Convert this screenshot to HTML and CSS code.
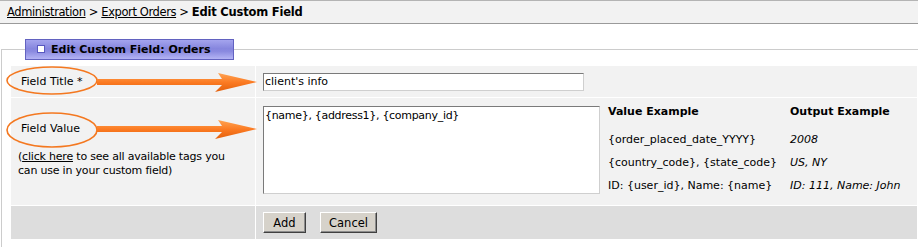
FILE: index.html
```html
<!DOCTYPE html>
<html>
<head>
    <link rel="stylesheet" href="styles.css">
</head>
<body>
    <div class="crumbs">
        <a href="#">Administration</a> &gt; <a href="#">Export Orders</a> &gt; <b>Edit Custom Field</b>
    </div>
    <fieldset class="panel">
        <legend><span class="box"></span>Edit Custom Field: Orders</legend>
        <table class="form">
            <tr class="first">
                <td class="label"><span class="name">Field Title *</span></td>
                <td class="value"><input type="text" value="client's info"></td>
            </tr>
            <tr class="second">
                <td class="label top">
                    <div class="name">Field Value</div>
                    <div class="note">(<a href="#">click here</a> to see all available tags you can use in your custom field)</div>
                </td>
                <td class="value">
                    <div class="pair">
                        <textarea spellcheck="false">{name}, {address1}, {company_id}</textarea>
                        <table class="examples">
                            <tr><th class="col">Value Example</th><th>Output Example</th></tr>
                            <tr><td>{order_placed_date_YYYY}</td><td class="out">2008</td></tr>
                            <tr><td>{country_code}, {state_code}</td><td class="out">US, NY</td></tr>
                            <tr><td>ID: {user_id}, Name: {name}</td><td class="out">ID: 111, Name: John</td></tr>
                        </table>
                    </div>
                </td>
            </tr>
            <tr class="actions">
                <td class="label"></td>
                <td class="value"><button type="button" class="btn add">Add</button><button type="button" class="btn cancel">Cancel</button></td>
            </tr>
        </table>
    </fieldset>

    <!-- orange annotation marks drawn over the form -->
    <svg class="marks" width="262" height="160" viewBox="0 0 262 160">
        <defs>
            <linearGradient id="orange" x1="0" y1="0" x2="0" y2="1">
                <stop offset="0" stop-color="#ffa454"/>
                <stop offset="0.5" stop-color="#fb7a22"/>
                <stop offset="1" stop-color="#e3600c"/>
            </linearGradient>
        </defs>
        <ellipse cx="52" cy="80.5" rx="45" ry="13.5" fill="none" stroke="#f47820" stroke-width="1.6"/>
        <ellipse cx="52" cy="130" rx="45" ry="17" fill="none" stroke="#f47820" stroke-width="1.6"/>
        <polygon points="97,79 222,79 218,73 257,82 215,92 222,85 97,85" fill="url(#orange)"/>
        <polygon points="97,126 222,126 218,120 257,129 215,139 222,132 97,132" fill="url(#orange)"/>
    </svg>
</body>
</html>
```

FILE: styles.css
```css
body {
    margin: 0;
    font-family: "DejaVu Sans", Verdana, sans-serif;
    font-size: 11px;
    color: #000;
    background: #fff;
}
a {
    color: #000;
}
.crumbs {
    height: 22px;
    line-height: 22px;
    padding-left: 7px;
    background-color: #f2f2f2;
    border-top: 1px solid #b4b4b4;
    border-bottom: 1px solid #9a9a9a;
    font-size: 11.5px;
    letter-spacing: -0.4px;
}
.crumbs b {
    letter-spacing: -0.2px;
}
.panel {
    margin: 15px 0 0 1px;
    padding: 5px 0 10px 8px;
    border: 1px solid #cccccc;
    border-right: 0;
    min-width: 0;
}
.panel legend {
    margin-left: 15px;
    padding: 0 22px 0 11px;
    height: 19px;
    line-height: 19px;
    font-weight: bold;
    border: 1px solid #6262c0;
    background: linear-gradient(#a4a4ee, #8686de 45%, #8a8ae0 60%, #b4b4f4);
}
.panel legend .box {
    display: inline-block;
    width: 6px;
    height: 6px;
    margin-right: 6px;
    vertical-align: 0;
    background: #fff;
    border: 1px solid #5858c0;
}
table.form {
    width: 100%;
    border-collapse: collapse;
}
.form > tbody > tr > td {
    padding: 0;
    border: 1px solid #fff;
    background-color: #f2f2f2;
    vertical-align: middle;
}
.form td.label {
    width: 237px;
    padding-left: 7px;
}
.form td.label.top {
    vertical-align: top;
}
.form tr.first td {
    height: 31px;
}
.form .name {
    padding-left: 3px;
}
.form td.top .name {
    display: block;
    padding-top: 24px;
    line-height: 14px;
}
.note {
    width: 212px;
    margin-top: 14px;
    line-height: 14px;
    letter-spacing: -0.2px;
}
.form td.value {
    padding: 0 7px;
}
.form tr.second td.value {
    padding: 8px 7px;
}
.form input[type="text"] {
    box-sizing: border-box;
    width: 321px;
    height: 18px;
    padding: 0 1px;
    border: 1px solid;
    border-color: #7a7a7a #cfcfcf #cfcfcf #7a7a7a;
    font-family: "DejaVu Sans", Verdana, sans-serif;
    font-size: 11px;
    display: block;
}
.pair {
    display: flex;
    align-items: flex-start;
    gap: 8px;
}
.pair textarea {
    box-sizing: border-box;
    width: 337px;
    height: 88px;
    margin: 0;
    padding: 2px 1px;
    resize: none;
    border: 1px solid;
    border-color: #7a7a7a #cfcfcf #cfcfcf #7a7a7a;
    font-family: "DejaVu Sans", Verdana, sans-serif;
    font-size: 11px;
    letter-spacing: -0.3px;
    line-height: 14px;
}
table.examples {
    margin-top: -1px;
    border-collapse: collapse;
}
.examples th {
    padding: 0 0 9px;
    line-height: 14px;
    text-align: left;
}
.examples th.col {
    width: 182px;
}
.examples td {
    padding: 0;
    line-height: 23px;
    white-space: nowrap;
}
.examples td.out {
    font-style: italic;
}
.form tr.actions td {
    height: 33px;
    background-color: #dddddd;
}
.btn {
    height: 21px;
    padding: 0;
    margin-right: 14px;
    font-family: "DejaVu Sans", Verdana, sans-serif;
    font-size: 11.5px;
    color: #000;
    background-color: #d6d2ca;
    border: 1px solid;
    border-color: #ffffff #404040 #404040 #ffffff;
    box-shadow: inset -1px -1px 0 #8c8c8c;
    vertical-align: middle;
}
.btn.add {
    width: 43px;
}
.btn.cancel {
    width: 57px;
}
.marks {
    position: absolute;
    top: 0;
    left: 0;
    pointer-events: none;
}
```
